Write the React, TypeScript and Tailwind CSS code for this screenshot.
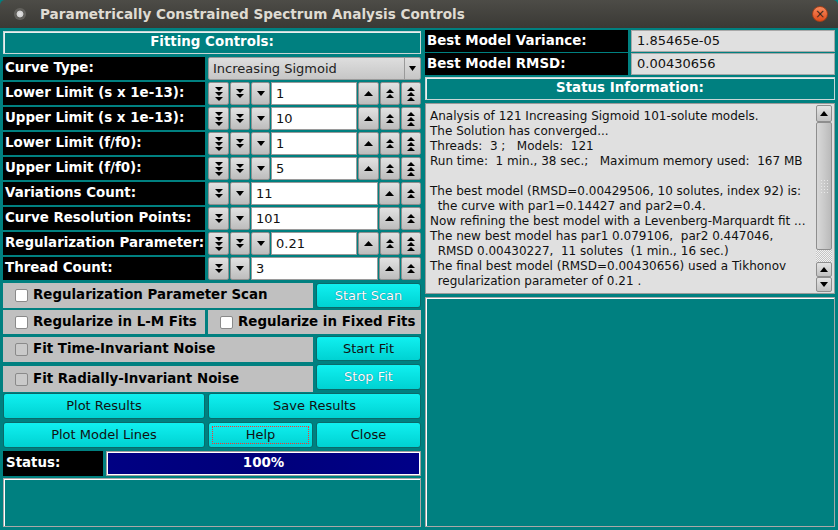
import React from "react";

const font = "font-['DejaVu_Sans','Liberation_Sans',sans-serif]";

function Tri({ dir, count, w }: { dir: "up" | "down"; count: number; w: number }) {
  const h = count === 1 ? 5 : 4;
  const total = count * h + (count - 1);
  return (
    <svg width={w} height={total} viewBox={`0 0 ${w} ${total}`}>
      {Array.from({ length: count }).map((_, i) => {
        const y = i * (h + 1);
        const pts =
          dir === "up"
            ? `0,${y + h} ${w / 2},${y} ${w},${y + h}`
            : `0,${y} ${w / 2},${y + h} ${w},${y}`;
        return <polygon key={i} points={pts} fill="#000" />;
      })}
    </svg>
  );
}

function SpinBtn({ className, children }: { className: string; children: React.ReactNode }) {
  return (
    <div
      className={`flex h-full shrink-0 items-center justify-center rounded-[2px] border border-[#8e8e8e] bg-gradient-to-b from-[#e2e2e2] to-[#bdbdbd] ${className}`}
    >
      {children}
    </div>
  );
}

function Label({ text, className = "w-[202px]" }: { text: string; className?: string }) {
  return (
    <div className={`flex h-full shrink-0 items-center bg-black pl-[2px] text-[13.4px] font-bold text-white ${className}`}>
      {text}
    </div>
  );
}

function SpinRow({ label, value, big }: { label: string; value: string; big?: boolean }) {
  return (
    <div className="mt-[2px] flex h-[23px] gap-[3px]">
      <Label text={label} />
      <div className="flex flex-1 gap-px">
        {big && (
          <SpinBtn className="w-[21px]">
            <Tri dir="down" count={3} w={8} />
          </SpinBtn>
        )}
        <SpinBtn className={big ? "w-[20px]" : "w-[21px]"}>
          <Tri dir="down" count={2} w={8} />
        </SpinBtn>
        <SpinBtn className={big ? "w-[19px]" : "w-[20px]"}>
          <Tri dir="down" count={1} w={8} />
        </SpinBtn>
        <div className="flex h-full min-w-0 flex-1 items-center border border-[#9a9a9a] bg-white pl-[4px] text-[13px] text-[#111]">
          {value}
        </div>
        <SpinBtn className="w-[21px]">
          <Tri dir="up" count={1} w={9} />
        </SpinBtn>
        <SpinBtn className="w-[20px]">
          <Tri dir="up" count={2} w={8} />
        </SpinBtn>
        {big && (
          <SpinBtn className="w-[20px]">
            <Tri dir="up" count={3} w={8} />
          </SpinBtn>
        )}
      </div>
    </div>
  );
}

function Check({ label, dim, className }: { label: string; dim?: boolean; className: string }) {
  return (
    <div className={`flex h-full items-center bg-[#c0c0c0] text-[13.4px] font-bold text-black ${className}`}>
      <div
        className={`mr-[5px] h-[13px] w-[13px] shrink-0 rounded-[2px] border border-[#8a8a8a] ${
          dim ? "bg-[#cacaca]" : "bg-white"
        }`}
      />
      {label}
    </div>
  );
}

function CyanBtn({
  children,
  className,
  light,
}: {
  children: React.ReactNode;
  className: string;
  light?: boolean;
}) {
  return (
    <div
      className={`flex h-full items-center justify-center rounded-[3px] border border-[#0a6a6a] bg-gradient-to-b from-[#10f0f0] to-[#00d2d2] text-[13px] ${
        light ? "text-white [text-shadow:0_0_1px_#057]" : "text-[#111]"
      } ${className}`}
    >
      {children}
    </div>
  );
}

function Banner({ text, className }: { text: string; className: string }) {
  return (
    <div
      className={`flex h-[23px] items-center justify-center border border-[#c9d6d6] bg-[#008080] text-[13.4px] font-bold text-white shadow-[inset_1px_1px_0_#e8f0f0] ${className}`}
    >
      {text}
    </div>
  );
}

const statusLines = [
  "Analysis of 121 Increasing Sigmoid 101-solute models.",
  "The Solution has converged...",
  "Threads:  3 ;   Models:  121",
  "Run time:  1 min., 38 sec.;   Maximum memory used:  167 MB",
  " ",
  "The best model (RMSD=0.00429506, 10 solutes, index 92) is:",
  "  the curve with par1=0.14427 and par2=0.4.",
  "Now refining the best model with a Levenberg-Marquardt fit ...",
  "The new best model has par1 0.079106,  par2 0.447046,",
  "  RMSD 0.00430227,  11 solutes  (1 min., 16 sec.)",
  "The final best model (RMSD=0.00430656) used a Tikhonov",
  "  regularization parameter of 0.21 .",
];

function ScrollBtn({ className, children }: { className: string; children: React.ReactNode }) {
  return (
    <div
      className={`flex items-center justify-center rounded-[2px] border border-[#8e8e8e] bg-gradient-to-b from-[#e4e4e4] to-[#c2c2c2] ${className}`}
    >
      {children}
    </div>
  );
}

export default function App() {
  return (
    <div className={`flex h-[530px] w-[838px] flex-col overflow-hidden bg-[#008080] ${font}`}>
      {/* title bar */}
      <div className="flex h-[28px] shrink-0 items-center rounded-t-[5px] bg-gradient-to-b from-[#4d4c47] to-[#3a3935] pl-[14px] pr-[10px]">
        <div className="h-[12px] w-[12px] rounded-full bg-[radial-gradient(circle_at_50%_50%,#e6e6e6_0%,#cfcfcf_35%,#5e5d59_45%,#6c6b66_100%)]" />
        <div className="ml-[14px] text-[13.6px] font-bold text-[#dfdbd2]">
          Parametrically Constrained Spectrum Analysis Controls
        </div>
        <div className="ml-auto flex h-[16px] w-[16px] items-center justify-center rounded-full border border-[#a3401a] bg-gradient-to-b from-[#f7885a] to-[#df4a17] text-[12px] leading-none text-[#3b2418]">
          ×
        </div>
      </div>

      <div className="flex flex-1 gap-[4px] px-[3px]">
        {/* left column */}
        <div className="flex w-[418px] flex-col">
          <Banner text="Fitting Controls:" className="mt-[3px]" />

          <div className="mt-[3px] flex h-[23px] gap-[3px]">
            <Label text="Curve Type:" />
            <div className="flex flex-1 items-center rounded-[2px] border border-[#9a9a9a] bg-gradient-to-b from-[#dedede] to-[#c6c6c6] text-[13px] text-[#222]">
              <div className="flex-1 pl-[4px]">Increasing Sigmoid</div>
              <div className="flex h-full w-[16px] items-center justify-center border-l border-[#9a9a9a]">
                <Tri dir="down" count={1} w={7} />
              </div>
            </div>
          </div>

          <SpinRow label="Lower Limit (s x 1e-13):" value="1" big />
          <SpinRow label="Upper Limit (s x 1e-13):" value="10" big />
          <SpinRow label="Lower Limit (f/f0):" value="1" big />
          <SpinRow label="Upper Limit (f/f0):" value="5" big />
          <SpinRow label="Variations Count:" value="11" />
          <SpinRow label="Curve Resolution Points:" value="101" />
          <SpinRow label="Regularization Parameter:" value="0.21" big />
          <SpinRow label="Thread Count:" value="3" />

          <div className="mt-[3px] flex h-[25px] gap-[3px]">
            <Check label="Regularization Parameter Scan" className="mb-[2px] w-[310px] pl-[12px]" />
            <CyanBtn className="flex-1" light>
              Start Scan
            </CyanBtn>
          </div>
          <div className="mt-[2px] flex h-[24px] gap-[3px]">
            <Check label="Regularize in L-M Fits" className="w-[202px] pl-[12px]" />
            <Check label="Regularize in Fixed Fits" className="flex-1 pl-[12px]" />
          </div>
          <div className="mt-[2px] flex h-[25px] gap-[3px]">
            <Check label="Fit Time-Invariant Noise" dim className="my-px w-[310px] pl-[12px]" />
            <CyanBtn className="flex-1">Start Fit</CyanBtn>
          </div>
          <div className="mt-[3px] flex h-[26px] gap-[3px]">
            <Check label="Fit Radially-Invariant Noise" dim className="mt-[2px] w-[310px] pl-[12px]" />
            <CyanBtn className="flex-1" light>
              Stop Fit
            </CyanBtn>
          </div>
          <div className="mt-[3px] flex h-[26px] gap-[3px]">
            <CyanBtn className="w-[202px]">Plot Results</CyanBtn>
            <CyanBtn className="flex-1">Save Results</CyanBtn>
          </div>
          <div className="mt-[3px] flex h-[26px] gap-[3px]">
            <CyanBtn className="w-[202px]">Plot Model Lines</CyanBtn>
            <CyanBtn className="w-[105px] p-[3px]">
              <div className="flex h-full w-full items-center justify-center border border-dotted border-[#ff3030]">
                Help
              </div>
            </CyanBtn>
            <CyanBtn className="flex-1">Close</CyanBtn>
          </div>
          <div className="mt-[3px] flex h-[25px] gap-[3px]">
            <Label text="Status:" className="w-[100px] pl-[3px]" />
            <div className="flex-1 border border-[#a0a0a0] bg-white p-px">
              <div className="flex h-full items-center justify-center bg-gradient-to-r from-[#000083] via-[#00007a] to-[#000088] text-[13.4px] font-bold text-white">
                100%
              </div>
            </div>
          </div>
          <div className="mt-[2px] h-[49px] border border-[#a8a8a8] bg-[#008080] shadow-[inset_1px_1px_0_#ffffff]" />
        </div>

        {/* right column */}
        <div className="flex w-[410px] flex-col">
          <div className="mt-[2px] flex h-[22px] gap-[3px]">
            <Label text="Best Model Variance:" className="w-[203px]" />
            <div className="flex flex-1 items-center border border-[#a8a8a8] bg-[#e0e0e0] pl-[5px] text-[13px] text-[#111]">
              1.85465e-05
            </div>
          </div>
          <div className="mt-px flex h-[22px] gap-[3px]">
            <Label text="Best Model RMSD:" className="w-[203px]" />
            <div className="flex flex-1 items-center border border-[#a8a8a8] bg-[#e0e0e0] pl-[5px] text-[13px] text-[#111]">
              0.00430656
            </div>
          </div>
          <Banner text="Status Information:" className="mt-[2px]" />

          <div className="mt-[3px] flex h-[191px] border border-[#9a9a9a] bg-[#e0e0e0]">
            <div className="min-w-0 flex-1 overflow-hidden pl-[4px] pt-[5px] text-[12px] leading-[15px] text-[#111]">
              {statusLines.map((l, i) => (
                <div key={i} className="whitespace-pre">
                  {l}
                </div>
              ))}
            </div>
            <div className="my-px mr-[2px] flex w-[16px] shrink-0 flex-col">
              <ScrollBtn className="h-[17px]">
                <Tri dir="up" count={1} w={8} />
              </ScrollBtn>
              <div className="flex flex-1 items-center justify-center rounded-[2px] border border-[#8e8e8e] bg-gradient-to-r from-[#d8d8d8] via-[#cacaca] to-[#bababa]">
                <div className="grid grid-cols-3 gap-[2px]">
                  {Array.from({ length: 15 }).map((_, i) => (
                    <div key={i} className="h-px w-px bg-[#e8e8e8]" />
                  ))}
                </div>
              </div>
              <div className="h-[12px] bg-[repeating-conic-gradient(#c4c4c4_0%_25%,#f2f2f2_0%_50%)] bg-[length:2px_2px]" />
              <ScrollBtn className="h-[15px]">
                <Tri dir="up" count={1} w={8} />
              </ScrollBtn>
              <ScrollBtn className="h-[15px]">
                <Tri dir="down" count={1} w={8} />
              </ScrollBtn>
            </div>
          </div>

          <div className="mt-[3px] h-[230px] border border-[#a8a8a8] bg-[#008080] shadow-[inset_1px_1px_0_#ffffff]" />
        </div>
      </div>
    </div>
  );
}
